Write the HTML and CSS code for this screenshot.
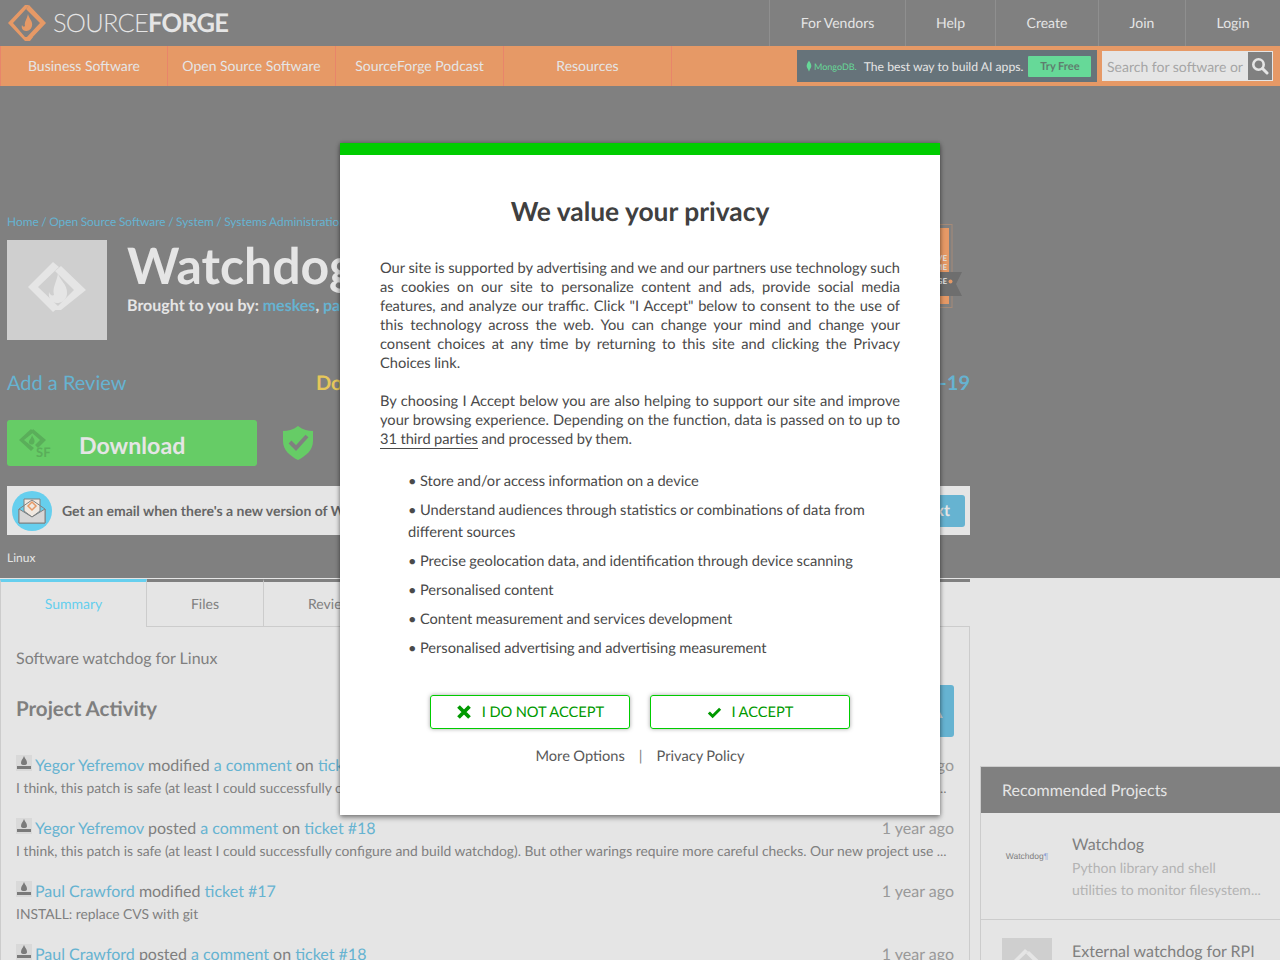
FILE: index.html
```html
<!DOCTYPE html>
<html lang="en">
<head>
    <meta charset="UTF-8">
    <title>Watchdog download | SourceForge.net</title>
    <link rel="stylesheet" href="styles.css">
</head>
<body>
    <header class="top-bar">
        <a class="logo">
            <svg class="logo-mark" viewBox="0 0 40 36" width="40" height="36">
                <path d="M18 0 L1 18 L18 36 L23 36 L26 32 L18 32 L6 18 L19 4 L22 0 Z" fill="#e69966"/>
                <path d="M22 0 L39 18 L22 36 L19 33 L33 18 L19 4 Z" fill="#e69966"/>
                <path d="M21 9 C22 14 26 16 25 21 C24 25 21 26 19 26 C16 26 14 23 15 20 C16 22 17 22 18 21 C17 17 20 14 21 9 Z" fill="#e69966"/>
            </svg>
            <span class="logo-text">SOURCE<b>FORGE</b></span>
        </a>
        <nav class="top-links">
            <a class="w-vendors">For Vendors</a>
            <a class="w-help">Help</a>
            <a class="w-create">Create</a>
            <a class="w-join">Join</a>
            <a class="w-login">Login</a>
        </nav>
    </header>

    <div class="orange-bar">
        <nav class="orange-links">
            <a>Business Software</a>
            <a>Open Source Software</a>
            <a>SourceForge Podcast</a>
            <a>Resources</a>
        </nav>
        <div class="promo">
            <svg viewBox="0 0 8 14" width="6" height="12"><path d="M4 0 C6 3 7.500 5 7 8 C6.500 10 5 11 4.300 14 L3.700 14 C3 11 1.500 10 1 8 C0.500 5 2 3 4 0 Z" fill="#66d998"/></svg>
            <span class="promo-brand">MongoDB.</span>
            <span class="promo-text">The best way to build AI apps.</span>
            <span class="promo-btn">Try Free</span>
        </div>
        <div class="search-box">
            <span class="search-field">Search for software or</span>
            <span class="search-btn">
                <svg viewBox="0 0 18 18" width="18" height="18"><circle cx="7.500" cy="7.500" r="5.200" fill="none" stroke="#e5e5e5" stroke-width="2.600"/><path d="M11.500 11.500 L16 16" stroke="#e5e5e5" stroke-width="3" stroke-linecap="round"/></svg>
            </span>
        </div>
    </div>

    <section class="hero">
        <div class="breadcrumbs">Home / Open Source Software / System / Systems Administration / Watchdog</div>
        <div class="project-head">
            <div class="project-icon">
                <svg viewBox="0 0 60 60" width="60" height="60">
                    <path d="M26 2 L1 27 L26 52 L32 47 L11 27 L32 7 Z" fill="#e5e5e5"/>
                    <path d="M34 6 L28 11 L47 30 L27 50 L34 50 L59 30 Z" fill="#e5e5e5"/>
                    <path d="M31 13 C32 20 41 24 40 34 C39 41 34 43 30 43 C25 43 21 39 22 32 C23 35 25 36 27 35 C25 27 30 22 31 13 Z" fill="#e5e5e5"/>
                </svg>
            </div>
            <div class="project-title">
                <h1>Watchdog</h1>
                <div class="brought">Brought to you by: <a>meskes</a>, <a>paulcrawford</a></div>
            </div>
            <svg class="badge" viewBox="0 0 60 84" width="60" height="84">
                <rect x="0" y="0.500" width="50" height="83" fill="none" stroke="#a58a78"/>
                <rect x="0" y="4" width="47" height="76" fill="#e69966"/>
                <path d="M0 48 L60 48 L54 60 L60 72 L0 72 Z" fill="#6e6e6e"/>
                <circle cx="48.500" cy="57.500" r="2" fill="#e69966"/>
                <text x="45" y="37" text-anchor="end" class="badge-text">LOVE</text>
                <text x="45" y="46" text-anchor="end" class="badge-text">ME</text>
                <text x="45" y="60" text-anchor="end" class="badge-text">FORGE</text>
            </svg>
        </div>
        <div class="stats-row">
            <a class="review-link">Add a Review</a>
            <span class="downloads">Downloads: 12 This Week</span>
            <span class="updated">Last Update: 2023-11-19</span>
        </div>
        <div class="action-row">
            <a class="download-btn">
                <svg class="dl-mark" viewBox="0 0 34 30" width="34" height="30">
                    <path d="M13 1 L1 12 L13 23 L16 20 L6 12 L16 4 Z" fill="#5aae5a"/>
                    <path d="M15 1 L28 12 L20 20 L17 17 L22 12 L13 4 Z" fill="#5aae5a"/>
                    <path d="M14 7 C15 10 17 11 16.500 14 C16 16 15 16.500 13.500 16.500 C11.500 16.500 10.500 15 11 13 C12 11 13.500 10 14 7 Z" fill="#5aae5a"/>
                    <text x="18" y="29" class="dl-sf">SF</text>
                </svg>
                <span>Download</span>
            </a>
            <svg class="shield" viewBox="0 0 32 34" width="32" height="34">
                <path d="M16 0 C21 4 26 5 31 5 L31 15 C31 24 24 30 16 34 C8 30 1 24 1 15 L1 5 C6 5 11 4 16 0 Z" fill="#66cc66"/>
                <path d="M8 16 L14 22 L25 10" fill="none" stroke="#808080" stroke-width="4"/>
            </svg>
        </div>
        <div class="email-bar">
            <div class="email-icon">
                <svg viewBox="0 0 40 40" width="40" height="40">
                    <circle cx="20" cy="20" r="20" fill="#66cfee"/>
                    <path d="M12 20 L12 8 L28 8 L28 20 L20 26 Z" fill="#f0e8e0" stroke="#808080"/>
                    <path d="M20 11 L24 15 L20 19 L16 15 Z" fill="none" stroke="#e69966" stroke-width="1.500"/>
                    <path d="M7 18 L20 9 L33 18 L33 32 L7 32 Z" fill="none" stroke="#808080"/>
                    <path d="M7 18 L20 26 L33 18 L33 32 L7 32 Z" fill="#d6d6d6" stroke="#808080"/>
                </svg>
            </div>
            <span class="email-text">Get an email when there's a new version of Watchdog</span>
            <a class="next-btn">Next</a>
        </div>
        <div class="os-label">Linux</div>
    </section>

    <div class="page-body">
        <main class="main-col">
            <div class="tabs">
                <a class="tab tab-active">Summary</a>
                <a class="tab tab-files">Files</a>
                <a class="tab tab-reviews">Reviews</a>
            </div>
            <div class="tab-panel">
                <p class="summary">Software watchdog for Linux</p>
                <div class="activity-head">
                    <h2>Project Activity</h2>
                    <a class="see-all">
                        <svg viewBox="0 0 16 16" width="16" height="16"><path d="M8 1 L15 15 L1 15 Z" fill="#cfcfcf"/></svg>
                    </a>
                </div>
                <div class="activity">
                    <div class="activity-line">
                        <span class="avatar"><svg viewBox="0 0 16 16" width="16" height="16"><path d="M8 1 C9 4 11 5 11 8 C11 9.500 10 10 8 10 C6 10 5 9.500 5 8 C5 5 7 4 8 1 Z M1 11 L15 11 L15 14 L1 14 Z" fill="#7a7a7a"/></svg></span>
                        <span class="activity-text"><a>Yegor Yefremov</a> modified <a>a comment</a> on <a>ticket #18</a></span>
                        <span class="time">1 year ago</span>
                    </div>
                    <p class="excerpt">I think, this patch is safe (at least I could successfully configure and build watchdog). But other warings require more careful checks. Our new project use ...</p>
                </div>
                <div class="activity">
                    <div class="activity-line">
                        <span class="avatar"><svg viewBox="0 0 16 16" width="16" height="16"><path d="M8 1 C9 4 11 5 11 8 C11 9.500 10 10 8 10 C6 10 5 9.500 5 8 C5 5 7 4 8 1 Z M1 11 L15 11 L15 14 L1 14 Z" fill="#7a7a7a"/></svg></span>
                        <span class="activity-text"><a>Yegor Yefremov</a> posted <a>a comment</a> on <a>ticket #18</a></span>
                        <span class="time">1 year ago</span>
                    </div>
                    <p class="excerpt">I think, this patch is safe (at least I could successfully configure and build watchdog). But other warings require more careful checks. Our new project use ...</p>
                </div>
                <div class="activity">
                    <div class="activity-line">
                        <span class="avatar"><svg viewBox="0 0 16 16" width="16" height="16"><path d="M8 1 C9 4 11 5 11 8 C11 9.500 10 10 8 10 C6 10 5 9.500 5 8 C5 5 7 4 8 1 Z M1 11 L15 11 L15 14 L1 14 Z" fill="#7a7a7a"/></svg></span>
                        <span class="activity-text"><a>Paul Crawford</a> modified <a>ticket #17</a></span>
                        <span class="time">1 year ago</span>
                    </div>
                    <p class="excerpt">INSTALL: replace CVS with git</p>
                </div>
                <div class="activity">
                    <div class="activity-line">
                        <span class="avatar"><svg viewBox="0 0 16 16" width="16" height="16"><path d="M8 1 C9 4 11 5 11 8 C11 9.500 10 10 8 10 C6 10 5 9.500 5 8 C5 5 7 4 8 1 Z M1 11 L15 11 L15 14 L1 14 Z" fill="#7a7a7a"/></svg></span>
                        <span class="activity-text"><a>Paul Crawford</a> posted <a>a comment</a> on <a>ticket #18</a></span>
                        <span class="time">1 year ago</span>
                    </div>
                </div>
            </div>
        </main>
        <aside class="sidebar">
            <div class="rec-box">
                <h3>Recommended Projects</h3>
                <div class="rec-item">
                    <div class="rec-thumb"><span class="rec-logo">Watchdog<i>¶</i></span></div>
                    <div class="rec-info">
                        <div class="rec-title">Watchdog</div>
                        <div class="rec-desc">Python library and shell utilities to monitor filesystem...</div>
                    </div>
                </div>
                <div class="rec-item">
                    <div class="rec-thumb rec-thumb-blank">
                        <svg viewBox="0 0 60 60" width="30" height="30">
                            <path d="M26 2 L1 27 L26 52 L32 47 L11 27 L32 7 Z" fill="#e5e5e5"/>
                            <path d="M34 6 L28 11 L47 30 L27 50 L34 50 L59 30 Z" fill="#e5e5e5"/>
                        </svg>
                    </div>
                    <div class="rec-info">
                        <div class="rec-title">External watchdog for RPI</div>
                    </div>
                </div>
            </div>
        </aside>
    </div>

    <div class="consent">
        <h2>We value your privacy</h2>
        <p>Our site is supported by advertising and we and our partners use technology such as cookies on our site to personalize content and ads, provide social media features, and analyze our traffic. Click "I Accept" below to consent to the use of this technology across the web. You can change your mind and change your consent choices at any time by returning to this site and clicking the Privacy Choices link.</p>
        <p>By choosing I Accept below you are also helping to support our site and improve your browsing experience. Depending on the function, data is passed on to up to <a class="parties">31 third parties</a> and processed by them.</p>
        <ul class="purposes">
            <li>• Store and/or access information on a device</li>
            <li>• Understand audiences through statistics or combinations of data from different sources</li>
            <li>• Precise geolocation data, and identification through device scanning</li>
            <li>• Personalised content</li>
            <li>• Content measurement and services development</li>
            <li>• Personalised advertising and advertising measurement</li>
        </ul>
        <div class="consent-btns">
            <a class="consent-btn">
                <svg viewBox="0 0 16 16" width="16" height="16"><path d="M2.500 2.500 L13.500 13.500 M13.500 2.500 L2.500 13.500" stroke="#009900" stroke-width="3.800" fill="none"/></svg>
                I DO NOT ACCEPT
            </a>
            <a class="consent-btn">
                <svg viewBox="0 0 16 16" width="15" height="15"><path d="M2 8 L6 12 L14 4" stroke="#009900" stroke-width="3.200" fill="none"/></svg>
                I ACCEPT
            </a>
        </div>
        <div class="consent-links">
            <a>More Options</a>
            <span class="sep">|</span>
            <a>Privacy Policy</a>
        </div>
    </div>
</body>
</html>
```
FILE: styles.css
```css
* {
    box-sizing: border-box;
}

html, body {
    height: 960px;
    overflow: hidden;
}

body {
    margin: 0;
    position: relative;
    font-family: Lato, "Open Sans", sans-serif;
    text-rendering: geometricPrecision;
    background: #e5e5e5;
    color: #7f7f7f;
}

a {
    color: #66b3d1;
    text-decoration: none;
}

/* top bar */
.top-bar {
    display: flex;
    justify-content: space-between;
    height: 46px;
    background: #808080;
}

.logo {
    display: flex;
    align-items: center;
    padding-left: 7px;
    gap: 6px;
}

.logo-text {
    font-size: 25.500px;
    font-weight: 300;
    color: #e5e5e5;
    letter-spacing: -0.800px;
}

.logo-text b {
    font-weight: 700;
}

.top-links {
    display: flex;
}

.top-links a {
    display: flex;
    align-items: center;
    justify-content: center;
    padding-bottom: 2px;
    border-left: 1px solid #8f8f8f;
    color: #e5e5e5;
    font-size: 14px;
}

.w-vendors { width: 136px; }
.w-help { width: 90px; }
.w-create { width: 103px; }
.w-join { width: 87px; }
.w-login { width: 95px; }

/* orange bar */
.orange-bar {
    display: flex;
    align-items: center;
    height: 40px;
    background: #e69966;
}

.orange-links {
    display: flex;
    height: 100%;
    flex: 1;
}

.orange-links a {
    display: flex;
    align-items: center;
    justify-content: center;
    width: 168px;
    height: 100%;
    padding-bottom: 1px;
    border-right: 1px solid #e8856a;
    color: #e5e5e5;
    font-size: 14px;
}

.orange-links a:first-child {
    border-left: 1px solid #e8856a;
}

.promo {
    display: flex;
    align-items: center;
    width: 300px;
    height: 32px;
    padding-left: 9px;
    background: #66737a;
    color: #e5e5e5;
}

.promo-brand {
    margin-left: 2px;
    font-size: 9px;
    color: #66d998;
}

.promo-text {
    margin-left: 7px;
    font-size: 12.200px;
    white-space: nowrap;
}

.promo-btn {
    margin-left: 5px;
    width: 63px;
    height: 21px;
    line-height: 21px;
    text-align: center;
    background: #66d998;
    border-radius: 1px;
    color: #5f7d6e;
    font-size: 11px;
    font-weight: 700;
}

.search-box {
    display: flex;
    width: 171px;
    height: 30px;
    margin: 0 7px 0 5px;
    border: 1px solid #e5e5e5;
    background: #e5e5e5;
}

.search-field {
    flex: 1;
    padding-left: 4px;
    overflow: hidden;
    white-space: nowrap;
    line-height: 29px;
    font-size: 14px;
    color: #a6a6a6;
}

.search-btn {
    display: flex;
    align-items: center;
    justify-content: center;
    width: 24px;
    background: #808080;
}

/* project hero */
.hero {
    height: 492px;
    padding: 128px 7px 0;
    background: #808080;
    color: #e5e5e5;
}

.breadcrumbs {
    height: 26px;
    font-size: 11.900px;
    word-spacing: -0.500px;
    line-height: 15px;
    color: #66b3d1;
    white-space: nowrap;
}

.project-head {
    display: flex;
    width: 955px;
    height: 100px;
}

.project-icon {
    display: flex;
    flex: none;
    align-items: center;
    justify-content: center;
    width: 100px;
    height: 100px;
    background: #cfcfcf;
}

.project-title {
    flex: 1;
    min-width: 0;
    margin-left: 20px;
}

.project-title h1 {
    margin: -1px 0 0;
    font-size: 50px;
    line-height: 52px;
    font-weight: 700;
    color: #e5e5e5;
}

.brought {
    margin-top: 5px;
    font-size: 16px;
    line-height: 20px;
    font-weight: 700;
    white-space: nowrap;
}

.badge {
    flex: none;
    margin-top: -16px;
}

.badge-text {
    font-family: Lato, sans-serif;
    font-size: 8px;
    font-weight: 700;
    fill: #e5e5e5;
}

.stats-row {
    display: flex;
    align-items: center;
    width: 963px;
    height: 26px;
    margin-top: 30px;
    font-size: 20px;
}

.review-link {
    width: 309px;
}

.downloads {
    font-weight: 700;
    color: #e6c75a;
}

.updated {
    margin-left: auto;
    font-weight: 700;
    color: #66b3d1;
}

.action-row {
    display: flex;
    align-items: center;
    gap: 25px;
    margin-top: 24px;
}

.download-btn {
    display: flex;
    align-items: center;
    width: 250px;
    height: 46px;
    padding-left: 11px;
    background: #66cc66;
    border-radius: 3px;
    color: #e5e5e5;
    font-size: 23.200px;
    font-weight: 700;
}

.download-btn span {
    margin-left: 27px;
    padding-top: 4px;
}

.dl-sf {
    font-family: Lato, sans-serif;
    font-size: 13px;
    font-weight: 700;
    fill: #5aae5a;
}

.shield {
    flex: none;
}

.email-bar {
    display: flex;
    align-items: center;
    width: 963px;
    height: 49px;
    margin-top: 20px;
    padding: 0 5px;
    background: #e5e5e5;
    color: #666;
    white-space: nowrap;
}

.email-icon {
    display: flex;
    flex: none;
}

.email-text {
    margin-left: 10px;
    font-size: 14px;
    font-weight: 700;
}

.next-btn {
    display: block;
    margin-left: auto;
    width: 65px;
    height: 32px;
    line-height: 32px;
    text-align: center;
    background: #66b3d1;
    border-radius: 3px;
    color: #e5e5e5;
    font-size: 16px;
    font-weight: 700;
}

.os-label {
    margin-top: 15px;
    font-size: 12px;
    line-height: 15px;
}

/* page below the hero */
.page-body {
    display: flex;
    background: #e5e5e5;
}

.main-col {
    width: 970px;
    flex: none;
}

.tabs {
    display: flex;
    height: 47px;
    margin-top: 1px;
}

.tab {
    display: flex;
    align-items: center;
    justify-content: center;
    height: 48px;
    padding-bottom: 3px;
    border-top: 3px solid #808080;
    border-right: 1px solid #ccc;
    font-size: 14px;
    color: #7f7f7f;
}

.tab-active {
    position: relative;
    width: 147px;
    background: #e5e5e5;
    border-top-color: #66cfee;
    border-left: 1px solid #ccc;
    color: #66cfee;
}

.tab-files {
    width: 117px;
}

.tab-reviews {
    flex: 1;
    justify-content: flex-start;
    padding-left: 44px;
    border-right: 0;
}

.tab-panel {
    height: 400px;
    padding: 0 15px;
    border: 1px solid #ccc;
}

.summary {
    margin: 22px 0 0;
    font-size: 16px;
    line-height: 20px;
}

.activity-head {
    display: flex;
    align-items: center;
    justify-content: space-between;
    height: 52px;
    margin-top: 16px;
    margin-bottom: 18px;
}

.activity-head h2 {
    margin: 0 0 4px;
    font-size: 20.500px;
    font-weight: 700;
    color: #7f7f7f;
}

.see-all {
    display: flex;
    align-items: center;
    justify-content: flex-end;
    width: 74px;
    height: 52px;
    padding-right: 10px;
    background: #66b3d1;
    border-radius: 3px;
}

.activity {
    height: 63px;
}

.activity-line {
    display: flex;
    align-items: flex-start;
    height: 22px;
    font-size: 16px;
    line-height: 22px;
}

.avatar {
    display: flex;
    width: 16px;
    height: 16px;
    margin-right: 3px;
    background: #d9d9d9;
}

.time {
    margin-left: auto;
    color: #999;
}

.excerpt {
    margin: 0;
    font-size: 13.850px;
    line-height: 22px;
    color: #7f7f7f;
    white-space: nowrap;
    overflow: hidden;
}

/* sidebar */
.sidebar {
    flex: 1;
    margin-left: 10px;
    padding-top: 188px;
}

.rec-box {
    border: 1px solid #ccc;
    border-right: 0;
}

.rec-box h3 {
    margin: 0;
    height: 46px;
    padding-left: 21px;
    background: #808080;
    color: #e5e5e5;
    font-size: 16px;
    font-weight: 400;
    line-height: 47px;
}

.rec-item {
    display: flex;
    height: 107px;
    padding: 20px 18px 0 21px;
    border-bottom: 1px solid #ccc;
}

.rec-thumb {
    display: flex;
    flex: none;
    align-items: center;
    justify-content: center;
    width: 50px;
    height: 50px;
    margin-top: -2px;
}

.rec-thumb-blank {
    background: #cfcfcf;
}

.rec-logo {
    font-family: "Liberation Sans", sans-serif;
    font-size: 8.500px;
    color: #7f7f7f;
}

.rec-logo i {
    font-style: normal;
    color: #8ea3d6;
}

.rec-info {
    min-width: 0;
    margin-left: 20px;
    padding-top: 1px;
}

.rec-title {
    font-size: 16px;
    line-height: 22px;
    color: #7f7f7f;
    white-space: nowrap;
}

.rec-desc {
    margin-top: 1px;
    font-size: 14px;
    line-height: 22px;
    color: #b3b3b3;
}

/* privacy dialog */
.consent {
    position: absolute;
    top: 143px;
    left: 340px;
    width: 600px;
    height: 672px;
    padding: 0 40px;
    background: #fff;
    border-top: 12px solid #00cc00;
    box-shadow: 0 3px 5px rgba(0, 0, 0, 0.35), 0 0 4px rgba(0, 0, 0, 0.3);
    color: #4a4a4a;
    font-size: 14.650px;
    word-spacing: -0.300px;
    line-height: 19px;
}

.consent h2 {
    margin: 40px 0 32px;
    text-align: center;
    font-size: 26.400px;
    line-height: 32px;
    font-weight: 700;
    word-spacing: 0;
    color: #404040;
}

.consent p {
    margin: 0 0 19px;
    text-align: justify;
}

.parties {
    color: #4a4a4a;
    border-bottom: 1px solid #4a4a4a;
}

.purposes {
    margin: 22px 0 0;
    padding: 0 28px;
    list-style: none;
    line-height: 22px;
}

.purposes li {
    margin-bottom: 7px;
}

.consent-btns {
    display: flex;
    justify-content: center;
    gap: 20px;
    margin-top: 35px;
}

.consent-btn {
    display: flex;
    align-items: center;
    justify-content: center;
    gap: 10px;
    width: 200px;
    height: 34px;
    border: 1px solid #00cc00;
    border-radius: 3px;
    box-shadow: 0 0 4px rgba(0, 0, 0, 0.35);
    color: #009900;
}

.consent-links {
    display: flex;
    justify-content: center;
    gap: 14px;
    margin-top: 18px;
    color: #595959;
}

.consent-links a {
    color: #595959;
}

.consent-links .sep {
    color: #808080;
}
```
